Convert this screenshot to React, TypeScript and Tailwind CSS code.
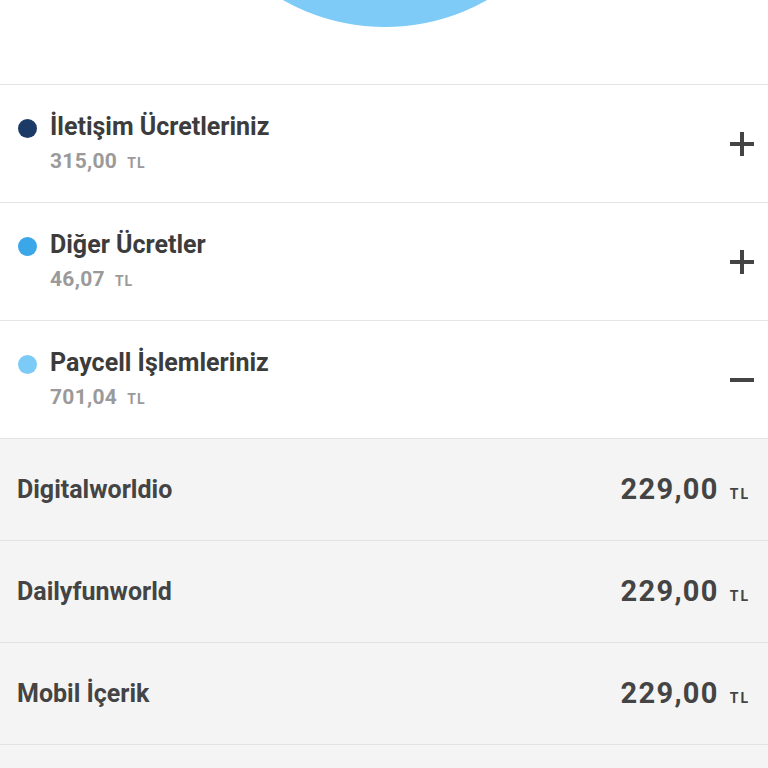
import React from "react";

const sections = [
  { title: "İletişim Ücretleriniz", amount: "315,00", color: "#1b3a66", open: false },
  { title: "Diğer Ücretler", amount: "46,07", color: "#3ba7e9", open: false },
  { title: "Paycell İşlemleriniz", amount: "701,04", color: "#7ccbf6", open: true },
];

const items = [
  { name: "Digitalworldio", amount: "229,00" },
  { name: "Dailyfunworld", amount: "229,00" },
  { name: "Mobil İçerik", amount: "229,00" },
];

function Plus() {
  return (
    <svg width="24" height="24" viewBox="0 0 24 24">
      <rect x="0" y="10" width="24" height="4" fill="#444" />
      <rect x="10" y="0" width="4" height="24" fill="#444" />
    </svg>
  );
}

function Minus() {
  return (
    <svg width="24" height="24" viewBox="0 0 24 24">
      <rect x="0" y="10" width="24" height="4" fill="#444" />
    </svg>
  );
}

export default function App() {
  return (
    <div
      className="w-[768px] h-[768px] overflow-hidden bg-white"
      style={{ fontFamily: "Roboto, 'Noto Sans', sans-serif" }}
    >
      <div className="h-[85px] border-b border-[#e4e4e4]">
        <svg width="768" height="84" className="block">
          <circle cx="385" cy="-180" r="207" fill="#7dcbf6" />
        </svg>
      </div>
      {sections.map((s) => (
        <div
          key={s.title}
          className="h-[118px] border-b border-[#e4e4e4] flex items-center pl-[18px] pr-[14px]"
        >
          <div className="w-[19px] h-[19px] rounded-full self-start mt-[34px]" style={{ backgroundColor: s.color }} />
          <div className="ml-[13px] flex flex-col mt-[1px]">
            <div className="text-[25px] leading-[30px] font-bold text-[#3c3c3c] -mt-[2px]">{s.title}</div>
            <div className="mt-[6px] flex items-baseline text-[#9a9a9a] font-bold">
              <span className="text-[21px] leading-[26px] tracking-[0.3px]">{s.amount}</span>
              <span className="ml-[10px] text-[14px] tracking-[1px]">TL</span>
            </div>
          </div>
          <div className="ml-auto">{s.open ? <Minus /> : <Plus />}</div>
        </div>
      ))}
      <div className="bg-[#f4f4f4]">
        {items.map((it) => (
          <div
            key={it.name}
            className="h-[102px] border-b border-[#e2e2e2] flex items-center pl-[17px] pr-[18px]"
          >
            <div className="text-[25px] font-bold text-[#444]">{it.name}</div>
            <div className="ml-auto flex items-baseline font-bold text-[#444]">
              <span className="text-[29px] tracking-[1.3px]">{it.amount}</span>
              <span className="ml-[11px] text-[14px] tracking-[2px]">TL</span>
            </div>
          </div>
        ))}
        <div className="h-[40px]" />
      </div>
    </div>
  );
}
